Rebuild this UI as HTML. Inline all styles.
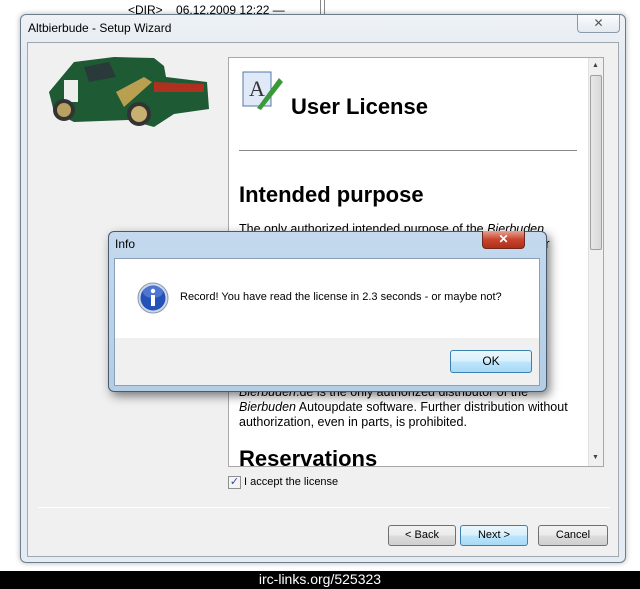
<!DOCTYPE html>
<html><head><style>
*{margin:0;padding:0;box-sizing:border-box}
body{width:640px;height:589px;background:#fff;position:relative;overflow:hidden;font-family:"Liberation Sans",sans-serif;font-size:12px;color:#000}
.abs{position:absolute}
.btn{position:absolute;height:21px;border:1px solid #707070;border-radius:3px;background:linear-gradient(#f2f2f2,#ebebeb 50%,#dddddd 51%,#cfcfcf);text-align:center;line-height:19px;font-size:11px}
.lic{font-size:12.5px;line-height:15px}
</style></head><body>
<div class="abs" style="left:128px;top:3px;font-size:12px">&lt;DIR&gt;&nbsp;&nbsp;&nbsp;&nbsp;06.12.2009 12:22 —</div>
<div class="abs" style="left:320px;top:0;width:1px;height:14px;background:#888"></div>
<div class="abs" style="left:324px;top:0;width:1px;height:14px;background:#888"></div>
<!-- main window -->
<div class="abs" style="left:20px;top:14px;width:606px;height:549px;border:1px solid #6e7d8c;border-radius:6px;background:linear-gradient(#eef2f6,#e4ebf2 40px);box-shadow:0 0 6px rgba(0,0,0,.3)"></div>
<div class="abs" style="left:28px;top:21px;font-size:12px">Altbierbude - Setup Wizard</div>
<div class="abs" style="left:577px;top:15px;width:43px;height:18px;border:1px solid #8a9aab;border-top:none;border-radius:0 0 4px 4px;background:linear-gradient(#fafcfe,#e3e9ef);text-align:center;font-size:12px;color:#555;line-height:17px">✕</div>
<div class="abs" style="left:27px;top:42px;width:592px;height:515px;background:#f0f0f0;border:1px solid #a0a8b0"></div>
<!-- car -->
<svg class="abs" style="left:44px;top:52px" width="170" height="75" viewBox="0 0 170 75">
<path d="M5 40 L30 10 L70 5 L110 6 L120 14 L122 25 L163 30 L165 57 L130 62 L110 75 L85 68 L30 70 L10 60 Z" fill="#1e5a33"/>
<path d="M40 15 L65 10 L72 25 L45 30 Z" fill="#2a3a3a"/>
<path d="M110 30 L160 32 L160 40 L110 40 Z" fill="#b03020"/>
<path d="M72 40 L100 25 L108 30 L80 55 Z" fill="#b8a050"/>
<rect x="20" y="28" width="14" height="22" fill="#eee"/>
<circle cx="20" cy="58" r="11" fill="#333"/><circle cx="20" cy="58" r="7" fill="#b8a060"/>
<circle cx="95" cy="62" r="12" fill="#333"/><circle cx="95" cy="62" r="8" fill="#c8b070"/>
</svg>
<!-- license box -->
<div class="abs" style="left:228px;top:57px;width:376px;height:410px;background:#fff;border:1px solid #a8a8a8;overflow:hidden">
 <div class="abs" style="left:10px;top:10px;width:44px;height:46px">
  <svg width="44" height="46"><rect x="4" y="4" width="28" height="34" fill="#dfe9f7" stroke="#5577aa"/><text x="10" y="28" font-size="22" font-family="Liberation Serif" fill="#333">A</text><path d="M18 40 L40 10 L44 14 L22 42 Z" fill="#3a9a3a"/></svg>
 </div>
 <div class="abs" style="left:62px;top:36px;font-size:22px;font-weight:bold">User License</div>
 <div class="abs" style="left:10px;top:92px;width:338px;height:1px;background:#888"></div>
 <div class="abs" style="left:10px;top:124px;font-size:22px;font-weight:bold">Intended purpose</div>
 <div class="abs lic" style="left:10px;top:164px;width:330px">The only authorized intended purpose of the <i>Bierbuden</i> Autoupdate software is the use as a file synchronizer for the local cache of the Bierbuden, which enables faster game downloads. For ... this software is...</div>
 <div class="abs lic" style="left:10px;top:327px;width:330px"><i>Bierbuden</i>.de is the only authorized distributor of the <i>Bierbuden</i> Autoupdate software. Further distribution without authorization, even in parts, is prohibited.</div>
 <div class="abs" style="left:10px;top:388px;font-size:22px;font-weight:bold">Reservations</div>
 <div class="abs" style="left:359px;top:0;width:16px;height:410px;background:#f0f0f0;border-left:1px solid #e0e0e0"></div>
 <div class="abs" style="left:361px;top:17px;width:12px;height:175px;background:linear-gradient(90deg,#e8e8e8,#d8d8d8);border:1px solid #a0a0a0;border-radius:2px"></div>
 <div class="abs" style="left:363px;top:4px;font-size:7px;color:#444">▲</div>
 <div class="abs" style="left:363px;top:396px;font-size:7px;color:#444">▼</div>
</div>
<div class="abs" style="left:228px;top:476px;width:13px;height:13px;border:1px solid #8f8f8f;background:#f4f4f4;font-size:11px;line-height:11px;text-align:center;color:#2a4f9a">✓</div>
<div class="abs" style="left:244px;top:476px;font-size:11px">I accept the license</div>
<div class="abs" style="left:38px;top:507px;width:572px;height:1px;background:#c8c8c8;border-bottom:1px solid #fff"></div>
<div class="btn" style="left:388px;top:525px;width:68px">&lt; Back</div>
<div class="btn" style="left:460px;top:525px;width:68px;border-color:#3c7fb1;background:linear-gradient(#eaf6fd,#d9f0fc 50%,#bee6fd 51%,#a7d9f5)">Next &gt;</div>
<div class="btn" style="left:538px;top:525px;width:70px">Cancel</div>
<!-- info dialog -->
<div class="abs" style="left:108px;top:231px;width:439px;height:161px;border:1px solid #4a5a6a;border-radius:6px;background:linear-gradient(#c4d9ee,#b3cde6);box-shadow:3px 4px 10px rgba(0,0,0,.5)"></div>
<div class="abs" style="left:115px;top:237px;font-size:12px">Info</div>
<div class="abs" style="left:482px;top:231px;width:43px;height:18px;border:1px solid #6b2a20;border-top:none;border-radius:0 0 4px 4px;background:linear-gradient(#e8a090,#c8442e 50%,#b02e18);color:#fff;text-align:center;font-weight:bold;line-height:17px;font-size:12px">✕</div>
<div class="abs" style="left:114px;top:258px;width:426px;height:128px;background:#f0f0f0;border:1px solid #8aa0b8"></div>
<div class="abs" style="left:115px;top:259px;width:424px;height:79px;background:#fff"></div>
<svg class="abs" style="left:137px;top:282px" width="32" height="32"><circle cx="16" cy="16" r="15" fill="#d0d8e8" stroke="#8898b0"/><circle cx="16" cy="16" r="12.5" fill="#2452b8"/><ellipse cx="16" cy="10" rx="10" ry="6" fill="#6b90e0" opacity=".6"/><circle cx="16" cy="9" r="2.2" fill="#fff"/><rect x="14" y="13" width="4" height="11" fill="#fff"/></svg>
<div class="abs" style="left:180px;top:291px;font-size:11px">Record! You have read the license in 2.3 seconds - or maybe not?</div>
<div class="btn" style="left:450px;top:350px;width:82px;height:23px;line-height:21px;font-size:12px;border-color:#3c7fb1;background:linear-gradient(#eaf6fd,#d9f0fc 50%,#bee6fd 51%,#a7d9f5)">OK</div>
<!-- bottom bar -->
<div class="abs" style="left:0;top:571px;width:640px;height:18px;background:#000;color:#fff;text-align:center;font-size:14px;line-height:17px">irc-links.org/525323</div>
</body></html>
